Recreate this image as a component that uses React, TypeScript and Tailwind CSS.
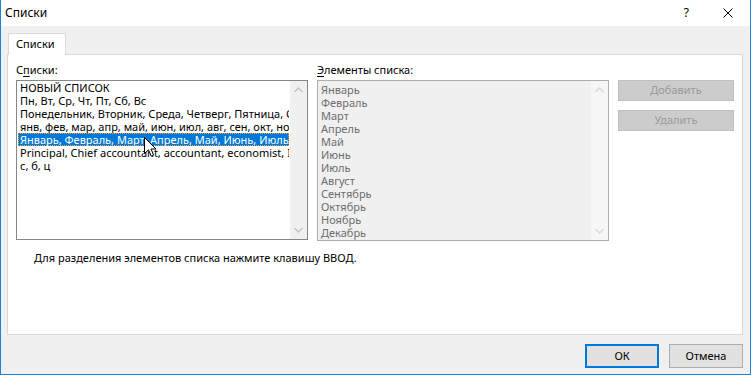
import React from 'react';

const font = { fontFamily: '"Noto Sans", "Liberation Sans", sans-serif' };

const lists = [
  'НОВЫЙ СПИСОК',
  'Пн, Вт, Ср, Чт, Пт, Сб, Вс',
  'Понедельник, Вторник, Среда, Четверг, Пятница, Суббота, Воскресенье',
  'янв, фев, мар, апр, май, июн, июл, авг, сен, окт, ноя, дек',
  'Январь, Февраль, Март, Апрель, Май, Июнь, Июль, Август, Сентябрь',
  'Principal, Chief accountant, accountant, economist, Intern',
  'с, б, ц',
];

const months = [
  'Январь', 'Февраль', 'Март', 'Апрель', 'Май', 'Июнь',
  'Июль', 'Август', 'Сентябрь', 'Октябрь', 'Ноябрь', 'Декабрь',
];

const Chevron: React.FC<{ up?: boolean; color: string }> = ({ up, color }) => (
  <svg width="9" height="6" viewBox="0 0 9 6" fill="none">
    <path d={up ? 'M0.5 5 L4.5 1 L8.5 5' : 'M0.5 1 L4.5 5 L8.5 1'} stroke={color} strokeWidth="1.3" />
  </svg>
);

const ScrollTrack: React.FC<{ bg: string; arrow: string }> = ({ bg, arrow }) => (
  <div className={`w-[17px] h-full flex flex-col items-center justify-between py-[6px] ${bg}`}>
    <Chevron up color={arrow} />
    <Chevron color={arrow} />
  </div>
);

const Cursor: React.FC = () => (
  <svg className="absolute left-[143px] top-[137px]" width="13" height="21" viewBox="0 0 13 21">
    <path d="M0.5 0.5 L0.5 16.5 L4.5 12.8 L7.2 19.2 L9.6 18.2 L7 12 L12 12 Z" fill="#fff" stroke="#000" strokeWidth="1" />
  </svg>
);

const App: React.FC = () => {
  return (
    <div className="relative w-[751px] h-[375px] bg-[#f0f0f0] border-l border-r border-b border-[#1883d7] flex flex-col text-[12px] text-black" style={font}>
      {/* title bar */}
      <div className="h-[26px] bg-white flex items-center pl-[4px] shrink-0">
        <span className="text-[12px]">Списки</span>
        <div className="ml-auto flex items-center">
          <span className="text-[12px] mr-[34px]">?</span>
          <svg className="mr-[17px]" width="10" height="10" viewBox="0 0 10 10">
            <path d="M0.5 0.5 L9.5 9.5 M9.5 0.5 L0.5 9.5" stroke="#000" strokeWidth="1" />
          </svg>
        </div>
      </div>

      <div className="flex flex-col pl-[6px] pr-[7px] pt-[7px]">
        {/* tab */}
        <div className="ml-[1px] w-[58px] h-[22px] bg-white border-t border-l border-r border-[#d9d9d9] -mb-[1px] relative z-10 flex items-center pl-[7px] text-[11px]">
          Списки
        </div>
        {/* panel */}
        <div className="h-[281px] bg-white border border-[#d9d9d9] pl-[8px] pt-[7px]">
          <div className="flex">
            {/* left column */}
            <div className="w-[292px] flex flex-col">
              <div className="h-[16px] leading-[16px] mb-[2px] text-[11px]">
                С<span className="underline underline-offset-2">п</span>иски:
              </div>
              <div className="h-[160px] border border-[#828790] bg-white flex">
                <div className="flex-1 min-w-0 overflow-hidden text-[11px] leading-[13px]">
                  {lists.map((l, i) => (
                    <div
                      key={i}
                      className={`whitespace-nowrap overflow-hidden ml-[1px] mr-[1px] pl-[2px] h-[13px] ${
                        i === 4 ? 'bg-[#0078d7] text-white outline-1 outline-dotted outline-[#f0a030] -outline-offset-1' : ''
                      }`}
                    >
                      {l}
                    </div>
                  ))}
                </div>
                <ScrollTrack bg="bg-[#f0f0f0]" arrow="#c2c2c2" />
              </div>
            </div>

            {/* right column */}
            <div className="w-[292px] ml-[9px] flex flex-col">
              <div className="h-[16px] leading-[16px] mb-[2px] text-[11px]">
                <span className="underline underline-offset-2">Э</span>лементы списка:
              </div>
              <div className="h-[161px] border border-[#adadad] bg-[#f0f0f0] flex">
                <div className="flex-1 min-w-0 overflow-hidden text-[11px] leading-[13px] text-[#6d6d6d] pl-[3px] pt-[2px]">
                  {months.map((m) => (
                    <div key={m} className="whitespace-nowrap h-[13px]">{m}</div>
                  ))}
                </div>
                <ScrollTrack bg="bg-[#f6f6f6]" arrow="#d6d6d6" />
              </div>
            </div>

            {/* buttons */}
            <div className="ml-[9px] pt-[18px] flex flex-col gap-[9px]">
              <div className="w-[116px] h-[21px] bg-[#cccccc] border border-[#bfbfbf] flex items-center justify-center text-[11px] text-[#9a9a9a]">
                Добавить
              </div>
              <div className="w-[116px] h-[21px] bg-[#cccccc] border border-[#bfbfbf] flex items-center justify-center text-[11px] text-[#9a9a9a]">
                Удалить
              </div>
            </div>
          </div>

          <div className="ml-[18px] mt-[9px] h-[16px] leading-[16px] text-[11px]">
            Для разделения элементов списка нажмите клавишу ВВОД.
          </div>
        </div>

        {/* dialog buttons */}
        <div className="flex justify-end mt-[9px] gap-[10px]">
          <div className="w-[74px] h-[24px] bg-[#e1e1e1] border-2 border-[#0078d7] flex items-center justify-center text-[11px]">
            ОК
          </div>
          <div className="w-[74px] h-[24px] bg-[#e1e1e1] border border-[#adadad] flex items-center justify-center text-[11px]">
            Отмена
          </div>
        </div>
      </div>

      <Cursor />
    </div>
  );
};

export default App;
